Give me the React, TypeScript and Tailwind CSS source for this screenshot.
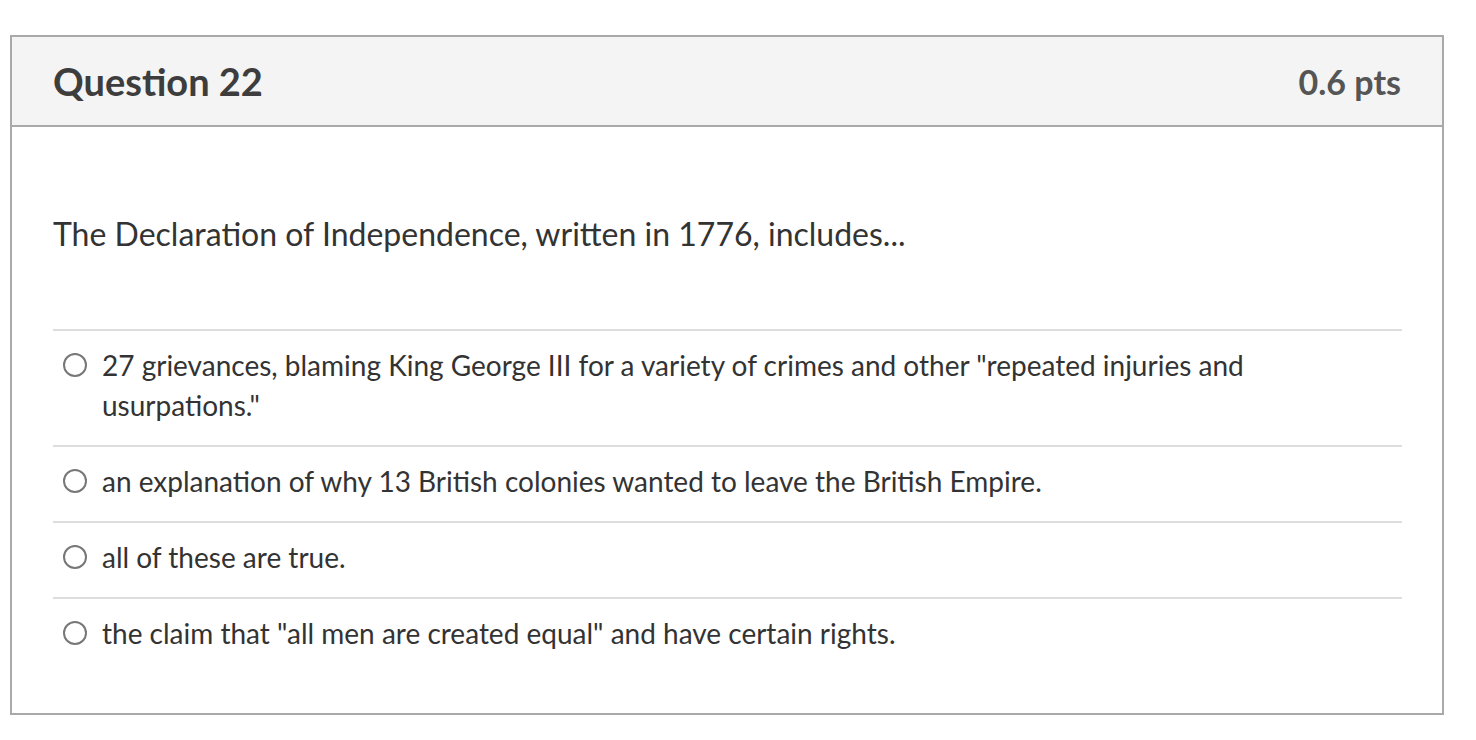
import React from 'react';

const answers = [
  '27 grievances, blaming King George III for a variety of crimes and other "repeated injuries and usurpations."',
  'an explanation of why 13 British colonies wanted to leave the British Empire.',
  'all of these are true.',
  'the claim that "all men are created equal" and have certain rights.',
];

export default function App() {
  return (
    <div className="min-h-screen bg-white pt-[35px] pl-[10px]" style={{ fontFamily: 'Lato, "Open Sans", sans-serif' }}>
      <div className="w-[1434px] h-[680px] border-2 border-[#a9a9a9] text-[#333]">
        {/* Header */}
        <div className="h-[90px] bg-[#f4f4f4] border-b-2 border-[#a9a9a9] px-[41px] flex items-center justify-between">
          <h2 className="text-[38px] font-bold text-[#3d3d3d]">Question 22</h2>
          <div className="text-[34px] font-bold text-[#555]">0.6 pts</div>
        </div>

        {/* Body */}
        <div className="px-[41px] pr-[40px]">
          <p className="pt-[86px] pb-[74px] text-[32px] leading-[42px]">
            The Declaration of Independence, written in 1776, includes...
          </p>
          <div>
            {answers.map((a, i) => (
              <div key={i} className="border-t-2 border-[#dddddd] pt-[14px] pb-[20px] flex items-start">
                <span className="mt-[8px] ml-[10px] w-[24px] h-[24px] rounded-full border-2 border-[#777] shrink-0" />
                <span className="ml-[15px] text-[28px] leading-[40px] pr-[140px]">{a}</span>
              </div>
            ))}
          </div>
        </div>
      </div>
    </div>
  );
}
